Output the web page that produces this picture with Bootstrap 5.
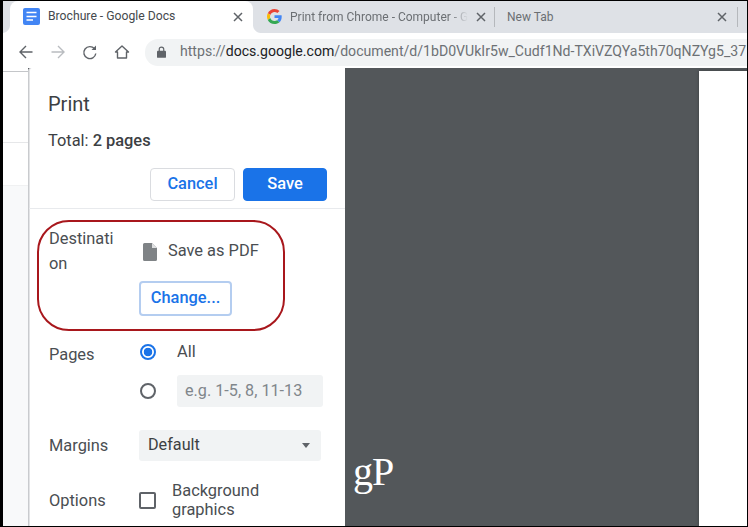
<!DOCTYPE html>
<html lang="en"><head><meta charset="utf-8"><title>Print</title>
<link href="https://cdn.jsdelivr.net/npm/bootstrap@5.3.0/dist/css/bootstrap.min.css" rel="stylesheet">
<style>
html,body{margin:0;height:527px;width:748px;overflow:hidden;background:#000}
body{font-family:Roboto,"Liberation Sans",sans-serif;color:#3c4043}
.frame{position:relative;width:748px;height:527px;border-style:solid;border-color:#000;border-width:1px 1px 1px 3px;background:#fff;display:flex;flex-direction:column;overflow:hidden}
.strip{height:32px;background:#dee1e6;display:flex;align-items:center;flex:none;font-size:12px;color:#6b6f73}
.tab-a{position:relative;width:243px;height:32px;margin-left:7px;background:#fff;border-radius:8px 8px 0 0;display:flex;align-items:center;padding:0 0 1px 13px;gap:8px;flex:none}
.tab-a::before,.tab-a::after{content:"";position:absolute;bottom:0;width:8px;height:8px}
.tab-a::before{left:-8px;background:radial-gradient(circle at 0 0,#dee1e6 7.5px,#fff 8.5px)}
.tab-a::after{right:-8px;background:radial-gradient(circle at 100% 0,#dee1e6 7.5px,#fff 8.5px)}
.tab-a .tt{width:177px;white-space:nowrap;color:#45494d;font-size:12.2px}
.tab-b{width:240px;height:32px;display:flex;align-items:center;padding:0 0 1px 11px;gap:8px;flex:none;margin-left:3px}
.tab-b .tt{width:178px;flex:none;white-space:nowrap;overflow:visible;-webkit-mask-image:linear-gradient(90deg,#000 160px,transparent 178px);mask-image:linear-gradient(90deg,#000 160px,transparent 178px)}
.tab-c{flex:1;display:flex;align-items:center;padding:0 0 1px 11px;height:32px}
.tab-c .tt{width:210px;flex:none}
.vbar{width:1px;height:20px;background:#b5b8bc;flex:none;margin-top:1px}
.vbar-far{margin-left:10px}
.tool{height:35px;flex:none;background:#fff;display:flex;align-items:center;padding:3px 0 0 13px}
.navic{width:20px;height:20px;margin-right:12px;flex:none}
.omni{margin-left:1px;height:27px;flex:1;background:#f1f3f4;border-radius:13px 0 0 13px;display:flex;align-items:center;padding-left:12px;gap:14px;font-size:14.1px;color:#6d7175;white-space:nowrap;overflow:hidden}
.omni b{font-weight:400;color:#202124}
.stage{flex:1;display:flex;min-height:0;background:#53575a}
.sliver{width:25px;flex:none;background:#fff;display:flex;flex-direction:column}
.sl1{height:72px;margin-top:3px;border-top:1px solid #c4c6c9;border-bottom:1px solid #e6e7e9}
.sl2{height:43px;border-bottom:1px solid #f0f1f2}
.sl3{flex:1;background:#f8f9fa}
.panel{width:317px;flex:none;background:#fff;border-left:1px solid #c9cbce;box-shadow:inset 1px 0 0 #e3e4e6;border-top-left-radius:3px;overflow:hidden}
.phead{height:141px;border-bottom:1px solid #e8eaed;padding:25px 18px 0 19px}
.ptitle{font-size:20px;line-height:22px;color:#3c4043}
.ptotal{font-size:16.4px;line-height:20px;margin-top:16px;color:#3c4043}
.ptotal strong{font-weight:500}
.pbtns{margin-top:17px;display:flex;justify-content:flex-end;gap:8px}
.bx{width:85px;height:33px;padding:0;font-size:16.4px;font-weight:500;border-radius:4px;line-height:1}
.bx-o{background:#fff;border:1px solid #dadce0;color:#1a73e8}
.bx-p{background:#1a73e8;border:1px solid #1a73e8;color:#fff;width:84px}
.line{display:flex;font-size:16.4px;color:#4a4e52}
.lbl{width:110px;padding-left:20px;flex:none;word-break:break-all;line-height:25px}
.lbl-d{padding-right:24px}
.dest{height:124px;padding-top:17px}
.dfile{display:flex;align-items:center;gap:11px;height:25px;margin-left:4px;margin-top:13px}
.chg{width:93px;height:35px;padding:0 0 0 0;margin-top:17px;background:#fff;border:2px solid #b4cdf0;color:#1a73e8;font-size:16.4px;font-weight:500;border-radius:4px;line-height:1}
.pgs{height:88px;padding-top:10px}
.pgs .lbl{margin-top:-1px}
.rad{width:16px;height:16px;border-radius:50%;border:2px solid #5f6368;flex:none;margin-left:1px}
.rad-on{border-color:#1a73e8;background:radial-gradient(circle,#1a73e8 0 4px,#fff 4.6px)}
.rrow{display:flex;align-items:center;gap:21px;height:16px;margin-top:1px}
.rrow2{margin-top:15px;height:32px}
.fake{background:#f1f3f4;border-radius:3px;height:32px;display:flex;align-items:center}
.inp{width:146px;padding-left:8px;color:#80868b;font-size:16.2px;white-space:nowrap}
.sel{width:182px;height:31px;padding:0 11px 0 9px;justify-content:space-between;color:#3c4043;font-size:16.2px}
.caret{width:0;height:0;border-left:4px solid transparent;border-right:4px solid transparent;border-top:5px solid #5f6368}
.mg{height:48px;align-items:center}
.opts{padding-top:12px;align-items:flex-start}
.opts .lbl{padding-top:7px}
.chk{width:17px;height:17px;border:2px solid #5f6368;border-radius:2px;flex:none;margin:11px 16px 0 0}
.otxt{line-height:19px}
.preview{flex:1;display:flex;justify-content:flex-end;background:#53575a;padding-top:3px}
.sheet{width:48px;background:#fff;box-shadow:0 0 3px #3a3d40}
.oval{position:absolute;left:34px;top:219px;width:248px;height:111px;border:2px solid #a8171c;border-radius:32px;pointer-events:none}
.wm{position:absolute;left:350px;top:449px;font-family:"Liberation Serif",serif;font-size:40px;line-height:44px;color:#fff;letter-spacing:-1px}
</style></head><body>
<div class="frame">
  <div class="strip">
    <div class="tab-a">
      <svg width="17" height="17" viewBox="0 0 17 17" class="flex-shrink-0"><rect width="17" height="17" rx="2" fill="#4285f4"/><path d="M3.500 4.500h10M3.500 8.500h10M3.500 12h6.500" stroke="#fff" stroke-width="1.600"/></svg>
      <span class="tt">Brochure - Google Docs</span>
      <svg width="10" height="10" viewBox="0 0 10 10" class="flex-shrink-0"><path d="M1 1l8 8M9 1l-8 8" stroke="#5f6368" stroke-width="1.500"/></svg>
    </div>
    <div class="tab-b">
      <svg width="15" height="15" viewBox="0 0 48 48" class="flex-shrink-0"><path fill="#ea4335" d="M24 9.500c3.500 0 6.700 1.200 9.200 3.600l6.900-6.900C35.900 2.400 30.500 0 24 0 14.600 0 6.500 5.400 2.600 13.200l8 6.200C12.500 13.700 17.800 9.500 24 9.500z"/><path fill="#4285f4" d="M47 24.500c0-1.600-.1-3.100-.4-4.500H24v9h12.900c-.6 3-2.200 5.500-4.700 7.200l7.700 6C44.400 38 47 31.800 47 24.500z"/><path fill="#fbbc05" d="M10.500 28.600c-.5-1.400-.8-3-.8-4.600s.3-3.200.8-4.600l-8-6.200C1 16.400 0 20.100 0 24s1 7.600 2.600 10.800z"/><path fill="#34a853" d="M24 48c6.500 0 11.900-2.100 15.900-5.800l-7.700-6c-2.100 1.400-4.900 2.300-8.200 2.300-6.200 0-11.500-4.200-13.400-9.900l-8 6.200C6.500 42.600 14.600 48 24 48z"/></svg>
      <span class="tt">Print from Chrome - Computer - G</span>
      <svg width="10" height="10" viewBox="0 0 10 10" class="flex-shrink-0"><path d="M1 1l8 8M9 1l-8 8" stroke="#5f6368" stroke-width="1.500"/></svg>
      <span class="vbar"></span>
    </div>
    <div class="tab-c">
      <span class="tt">New Tab</span>
      <svg width="10" height="10" viewBox="0 0 10 10" class="flex-shrink-0"><path d="M1 1l8 8M9 1l-8 8" stroke="#5f6368" stroke-width="1.500"/></svg>
      <span class="vbar vbar-far"></span>
    </div>
  </div>
  <div class="tool">
    <svg class="navic" viewBox="0 0 20 20"><path d="M16.500 10H4M10 4l-6 6 6 6" fill="none" stroke="#5f6368" stroke-width="1.400"/></svg>
    <svg class="navic" viewBox="0 0 20 20"><path d="M3.500 10H16M10 4l6 6-6 6" fill="none" stroke="#b9bcc0" stroke-width="1.400"/></svg>
    <svg class="navic" viewBox="0 0 20 20"><path d="M14.500 6.800A6 6 0 1 0 15.800 11.500" fill="none" stroke="#5f6368" stroke-width="1.400"/><path d="M16 3.500v4.500h-4.500z" fill="#5f6368"/></svg>
    <svg class="navic" viewBox="0 0 20 20"><path d="M3.500 10L10 4l6.500 6H14.500v6h-9v-6z" fill="none" stroke="#5f6368" stroke-width="1.400" stroke-linejoin="round"/></svg>
    <div class="omni">
      <svg width="9" height="12" viewBox="0 0 10 13" class="flex-shrink-0"><path d="M2.500 5.500V3.500a2.500 2.500 0 0 1 5 0v2" fill="none" stroke="#5f6368" stroke-width="1.300"/><rect y="5" width="10" height="8" rx="1" fill="#5f6368"/></svg>
      <span>https://<b>docs.google.com</b>/document/d/1bD0VUkIr5w_Cudf1Nd-TXiVZQYa5th70qNZYg5_37</span>
    </div>
  </div>
  <div class="stage">
    <div class="sliver"><div class="sl1"></div><div class="sl2"></div><div class="sl3"></div></div>
    <div class="panel">
      <div class="phead">
        <div class="ptitle">Print</div>
        <div class="ptotal">Total: <strong>2 pages</strong></div>
        <div class="pbtns"><button class="btn bx bx-o">Cancel</button><button class="btn bx bx-p">Save</button></div>
      </div>
      <div class="line dest">
        <div class="lbl lbl-d">Destination</div>
        <div>
          <div class="dfile">
            <svg width="14" height="18" viewBox="0 0 14 18" class="flex-shrink-0"><path d="M1.500 0H9l5 5v11.500a1.500 1.500 0 0 1-1.500 1.500h-11A1.500 1.500 0 0 1 0 16.500v-15A1.500 1.500 0 0 1 1.500 0z" fill="#7f8386"/><path d="M9 0v5h5z" fill="#dfe0e1"/></svg>
            <span>Save as PDF</span>
          </div>
          <button class="btn chg">Change...</button>
        </div>
      </div>
      <div class="line pgs">
        <div class="lbl">Pages</div>
        <div>
          <div class="rrow"><span class="rad rad-on"></span><span>All</span></div>
          <div class="rrow rrow2"><span class="rad"></span><div class="fake inp">e.g. 1-5, 8, 11-13</div></div>
        </div>
      </div>
      <div class="line mg">
        <div class="lbl">Margins</div>
        <div class="fake sel"><span>Default</span><span class="caret"></span></div>
      </div>
      <div class="line opts">
        <div class="lbl">Options</div>
        <span class="chk"></span>
        <div class="otxt">Background<br>graphics</div>
      </div>
    </div>
    <div class="preview"><div class="sheet"></div></div>
  </div>
  <div class="oval"></div>
  <div class="wm">gP</div>
</div>
</body></html>
